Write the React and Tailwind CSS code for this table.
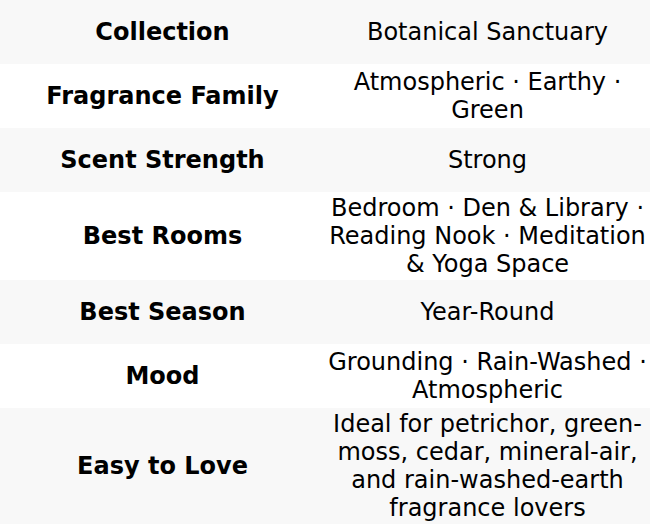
const ROWS = [
  ["Collection", "Botanical Sanctuary"],
  ["Fragrance Family", "Atmospheric · Earthy · Green"],
  ["Scent Strength", "Strong"],
  ["Best Rooms", "Bedroom · Den & Library · Reading Nook · Meditation & Yoga Space"],
  ["Best Season", "Year-Round"],
  ["Mood", "Grounding · Rain-Washed · Atmospheric"],
  ["Easy to Love", "Ideal for petrichor, green-moss, cedar, mineral-air, and rain-washed-earth fragrance lovers"],
];

export default function App() {
  return (
    <div
      className="w-[650px] bg-white text-black text-[24px] leading-[28px]"
      style={{ fontFamily: '"DejaVu Sans", sans-serif' }}
    >
      {ROWS.map(([label, value], i) => (
        <div
          key={label}
          className={`grid grid-cols-2 min-h-[64px] ${i % 2 === 0 ? "bg-[#f8f8f8]" : "bg-white"}`}
        >
          <div className="flex items-center justify-center px-[2px] py-0.5 text-center font-bold">
            {label}
          </div>
          <div className="flex items-center justify-center px-[2px] py-0.5 text-center">
            {value}
          </div>
        </div>
      ))}
    </div>
  );
}
